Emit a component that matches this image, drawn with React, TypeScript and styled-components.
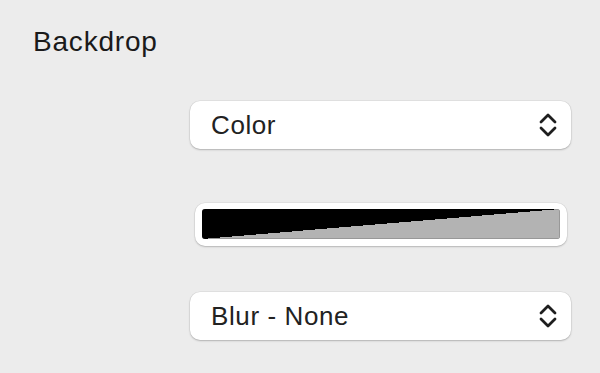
import React from 'react'
import styled, { createGlobalStyle } from 'styled-components'

const GlobalStyle = createGlobalStyle`
  html, body {
    margin: 0;
    padding: 0;
    background: #ececec;
    font-family: "Liberation Sans", Arial, sans-serif;
  }
`

const Page = styled.div`
  width: 600px;
  height: 373px;
  box-sizing: border-box;
  padding: 26px 0 0 33px;
  background: #ececec;
  overflow: hidden;
`

const Title = styled.div`
  font-size: 28px;
  line-height: 32px;
  letter-spacing: 0.8px;
  color: #1a1a1a;
`

const Controls = styled.div`
  display: flex;
  flex-direction: column;
  width: 381px;
  margin-left: 157px;
`

const Select = styled.div<{ gap: number }>`
  display: flex;
  align-items: center;
  justify-content: space-between;
  height: 48px;
  margin-top: ${({ gap }) => gap}px;
  padding: 0 13px 0 21px;
  box-sizing: border-box;
  background: #ffffff;
  border-radius: 10px;
  box-shadow: 0 0 0 0.5px rgba(0, 0, 0, 0.08), 0 1px 2px rgba(0, 0, 0, 0.22);
  font-size: 26px;
  letter-spacing: 0.6px;
  color: #222222;
`

const Well = styled.div`
  display: flex;
  height: 43px;
  margin: 54px 4px 0 5px;
  padding: 6px 7px 7px 7px;
  box-sizing: border-box;
  background: #ffffff;
  border-radius: 10px;
  box-shadow: 0 0 0 0.5px rgba(0, 0, 0, 0.08), 0 1px 2px rgba(0, 0, 0, 0.2);
`

const Swatch = styled.div`
  flex: 1;
  border-radius: 3px;
  overflow: hidden;
  box-shadow: inset 0 0 0 0.5px rgba(0, 0, 0, 0.3);
  background: linear-gradient(to top left, #b3b3b3 50%, #000000 50%);
`

const Chevrons = () => (
  <svg width="20" height="28" viewBox="0 0 20 28" fill="none">
    <polyline points="3,11 10,4 17,11" stroke="#1e1e1e" strokeWidth="2.8" strokeLinecap="round" strokeLinejoin="round" />
    <polyline points="3,17 10,24 17,17" stroke="#1e1e1e" strokeWidth="2.8" strokeLinecap="round" strokeLinejoin="round" />
  </svg>
)

export default function App() {
  return (
    <Page>
      <GlobalStyle />
      <Title>Backdrop</Title>
      <Controls>
        <Select gap={43}>
          <span>Color</span>
          <Chevrons />
        </Select>
        <Well>
          <Swatch />
        </Well>
        <Select gap={46}>
          <span>Blur - None</span>
          <Chevrons />
        </Select>
      </Controls>
    </Page>
  )
}
